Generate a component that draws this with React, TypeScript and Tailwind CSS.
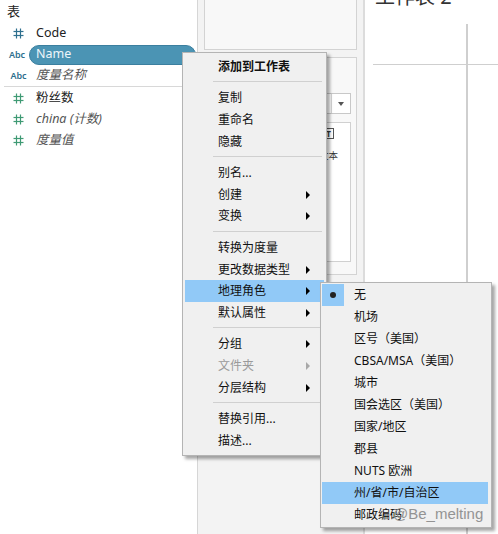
import React from 'react';

type MenuEntry =
  | { kind: 'item'; label: string; bold?: boolean; sub?: boolean; active?: boolean; disabled?: boolean }
  | { kind: 'sep' };

const mainMenu: MenuEntry[] = [
  { kind: 'item', label: '添加到工作表', bold: true },
  { kind: 'sep' },
  { kind: 'item', label: '复制' },
  { kind: 'item', label: '重命名' },
  { kind: 'item', label: '隐藏' },
  { kind: 'sep' },
  { kind: 'item', label: '别名...' },
  { kind: 'item', label: '创建', sub: true },
  { kind: 'item', label: '变换', sub: true },
  { kind: 'sep' },
  { kind: 'item', label: '转换为度量' },
  { kind: 'item', label: '更改数据类型', sub: true },
  { kind: 'item', label: '地理角色', sub: true, active: true },
  { kind: 'item', label: '默认属性', sub: true },
  { kind: 'sep' },
  { kind: 'item', label: '分组', sub: true },
  { kind: 'item', label: '文件夹', sub: true, disabled: true },
  { kind: 'item', label: '分层结构', sub: true },
  { kind: 'sep' },
  { kind: 'item', label: '替换引用...' },
  { kind: 'item', label: '描述...' },
];

const geoRoles = [
  '无',
  '机场',
  '区号（美国）',
  'CBSA/MSA（美国）',
  '城市',
  '国会选区（美国）',
  '国家/地区',
  '郡县',
  'NUTS 欧洲',
  '州/省/市/自治区',
  '邮政编码',
];

const Hash = ({ color }: { color: string }) => (
  <svg width="11" height="11" viewBox="0 0 11 11" className="shrink-0">
    <g stroke={color} strokeWidth="1.2" fill="none">
      <line x1="3.5" y1="0.5" x2="3.5" y2="10.5" />
      <line x1="7.5" y1="0.5" x2="7.5" y2="10.5" />
      <line x1="0.5" y1="3.5" x2="10.5" y2="3.5" />
      <line x1="0.5" y1="7.5" x2="10.5" y2="7.5" />
    </g>
  </svg>
);

const Abc = () => (
  <span className="text-[9px] font-semibold text-[#2e6f8e] leading-none">Abc</span>
);

const FieldRow = ({
  icon,
  label,
  italic,
}: {
  icon: React.ReactNode;
  label: string;
  italic?: boolean;
}) => (
  <div className="h-[21px] flex items-center">
    <div className="w-[36px] flex justify-center pl-[1px]">{icon}</div>
    <span className={`text-[12.5px] ${italic ? 'italic text-[#555]' : 'text-[#222]'}`}>{label}</span>
  </div>
);

const Arrow = ({ disabled }: { disabled?: boolean }) => (
  <span
    className={`ml-auto mr-[14px] w-0 h-0 border-y-[4px] border-y-transparent border-l-[4px] ${
      disabled ? 'border-l-[#a8a8a8]' : 'border-l-black'
    }`}
  />
);

export default function App() {
  return (
    <div className="relative w-[498px] h-[534px] overflow-hidden bg-white font-['Noto_Sans','Noto_Sans_CJK_SC',sans-serif] text-[#1a1a1a]">
      <div className="flex h-full">
        {/* data pane */}
        <div className="w-[198px] border-r border-[#d6d6d6] bg-white">
          <div className="h-[23px] pl-[7px] flex items-center text-[13px] text-[#222]">表</div>
          <FieldRow icon={<Hash color="#2e6f8e" />} label="Code" />
          <div className="h-[21px] flex items-center">
            <div className="w-[29px] flex justify-center pl-[5px]">
              <Abc />
            </div>
            <div className="flex-1 h-[20px] mr-[1px] rounded-full bg-[#4b94b4] border border-[#3b7f9f] flex items-center pl-[6px] text-[12.5px] text-[#eef6fa]">
              Name
            </div>
          </div>
          <FieldRow icon={<Abc />} label="度量名称" italic />
          <div className="h-[2px] flex items-start">
            <div className="ml-[4px] flex-1 h-px bg-[#d8d8d8]" />
          </div>
          <FieldRow icon={<Hash color="#3f9a74" />} label="粉丝数" />
          <FieldRow icon={<Hash color="#3f9a74" />} label="china (计数)" italic />
          <FieldRow icon={<Hash color="#3f9a74" />} label="度量值" italic />
        </div>

        {/* shelves column */}
        <div className="w-[167px] bg-[#f3f3f3] border-r-2 border-[#dcdcdc] pl-[6px] pr-[6px] flex flex-col gap-[7px]">
          <div className="h-[51px] -mt-px bg-[#f8f8f8] border border-[#d3d3d3]" />
          <div className="h-[218px] bg-[#f8f8f8] border border-[#d3d3d3] pt-[35px] px-[5px]">
            <div className="h-[21px] bg-white border border-[#c8c8c8] flex justify-end">
              <div className="w-[19px] border-l border-[#d6d6d6] flex items-center justify-center">
                <span className="w-0 h-0 border-x-[3.5px] border-x-transparent border-t-[4px] border-t-[#555]" />
              </div>
            </div>
            <div className="mt-[8px] h-[140px] bg-white border border-[#d0d0d0] flex justify-end pr-[12px] pt-[5px]">
              <div className="flex flex-col items-center">
                <div className="w-[11px] h-[11px] border border-[#555] text-[8px] font-bold leading-[9px] text-center text-[#333]">T</div>
                <span className="mt-[12px] text-[9.5px] text-[#333] leading-none">文本</span>
              </div>
            </div>
          </div>
        </div>

        {/* worksheet */}
        <div className="flex-1 bg-white pl-[8px]">
          <div className="h-[24px] -mt-[15px] ml-[2px] text-[20px] leading-[24px] text-[#333]">工作表 2</div>
          <div className="flex h-[510px] mt-[15px]">
            <div className="flex-1 flex flex-col">
              <div className="h-[40px]" />
              <div className="h-px bg-[#cfcfcf]" />
            </div>
            <div className="w-[2px] bg-[#cfcfcf]" />
            <div className="w-[30px] flex flex-col">
              <div className="h-[40px]" />
              <div className="h-px bg-[#cfcfcf]" />
            </div>
          </div>
        </div>
      </div>

      {/* context menu */}
      <div className="absolute left-[182px] top-[52px] w-[145px] h-[404px] bg-[#f0f0f0] border border-[#b4b4b4] shadow-[3px_3px_3px_rgba(0,0,0,0.35)] pt-[3px]">
        {mainMenu.map((m, i) =>
          m.kind === 'sep' ? (
            <div key={i} className="h-[10px] pt-[3.5px] pl-[30px] pr-[4px]">
              <div className="h-px bg-[#d0d0d0]" />
            </div>
          ) : (
            <div
              key={i}
              className={`h-[21.6px] mx-[2px] flex items-center pl-[33px] text-[12px] ${
                m.active ? 'bg-[#91c9f7]' : ''
              } ${m.disabled ? 'text-[#9a9a9a]' : 'text-[#111]'} ${m.bold ? 'font-bold' : ''}`}
            >
              <span>{m.label}</span>
              {m.sub && <Arrow disabled={m.disabled} />}
            </div>
          )
        )}
      </div>

      {/* geographic role submenu */}
      <div className="absolute left-[320px] top-[282px] w-[172px] h-[246px] bg-[#f0f0f0] border border-[#b4b4b4] shadow-[3px_3px_3px_rgba(0,0,0,0.35)] pt-px">
        {geoRoles.map((g, i) => (
          <div
            key={g}
            className={`h-[22px] mx-[1px] flex items-center text-[12px] text-[#111] ${
              i === 9 ? 'bg-[#91c9f7] mr-[3px]' : ''
            }`}
          >
            <div className={`w-[22px] h-[22px] flex items-center justify-center ${i === 0 ? 'bg-[#91c9f7]' : ''}`}>
              {i === 0 && <span className="w-[6px] h-[6px] rounded-full bg-[#222]" />}
            </div>
            <span className="ml-[10px]">{g}</span>
          </div>
        ))}
      </div>

      {/* watermark */}
      <div className="absolute left-[393px] top-[504px] text-[15px] leading-[20px] text-[#8a8a8a] font-['Liberation_Sans',sans-serif] opacity-90">
        @Be_melting
      </div>
    </div>
  );
}
